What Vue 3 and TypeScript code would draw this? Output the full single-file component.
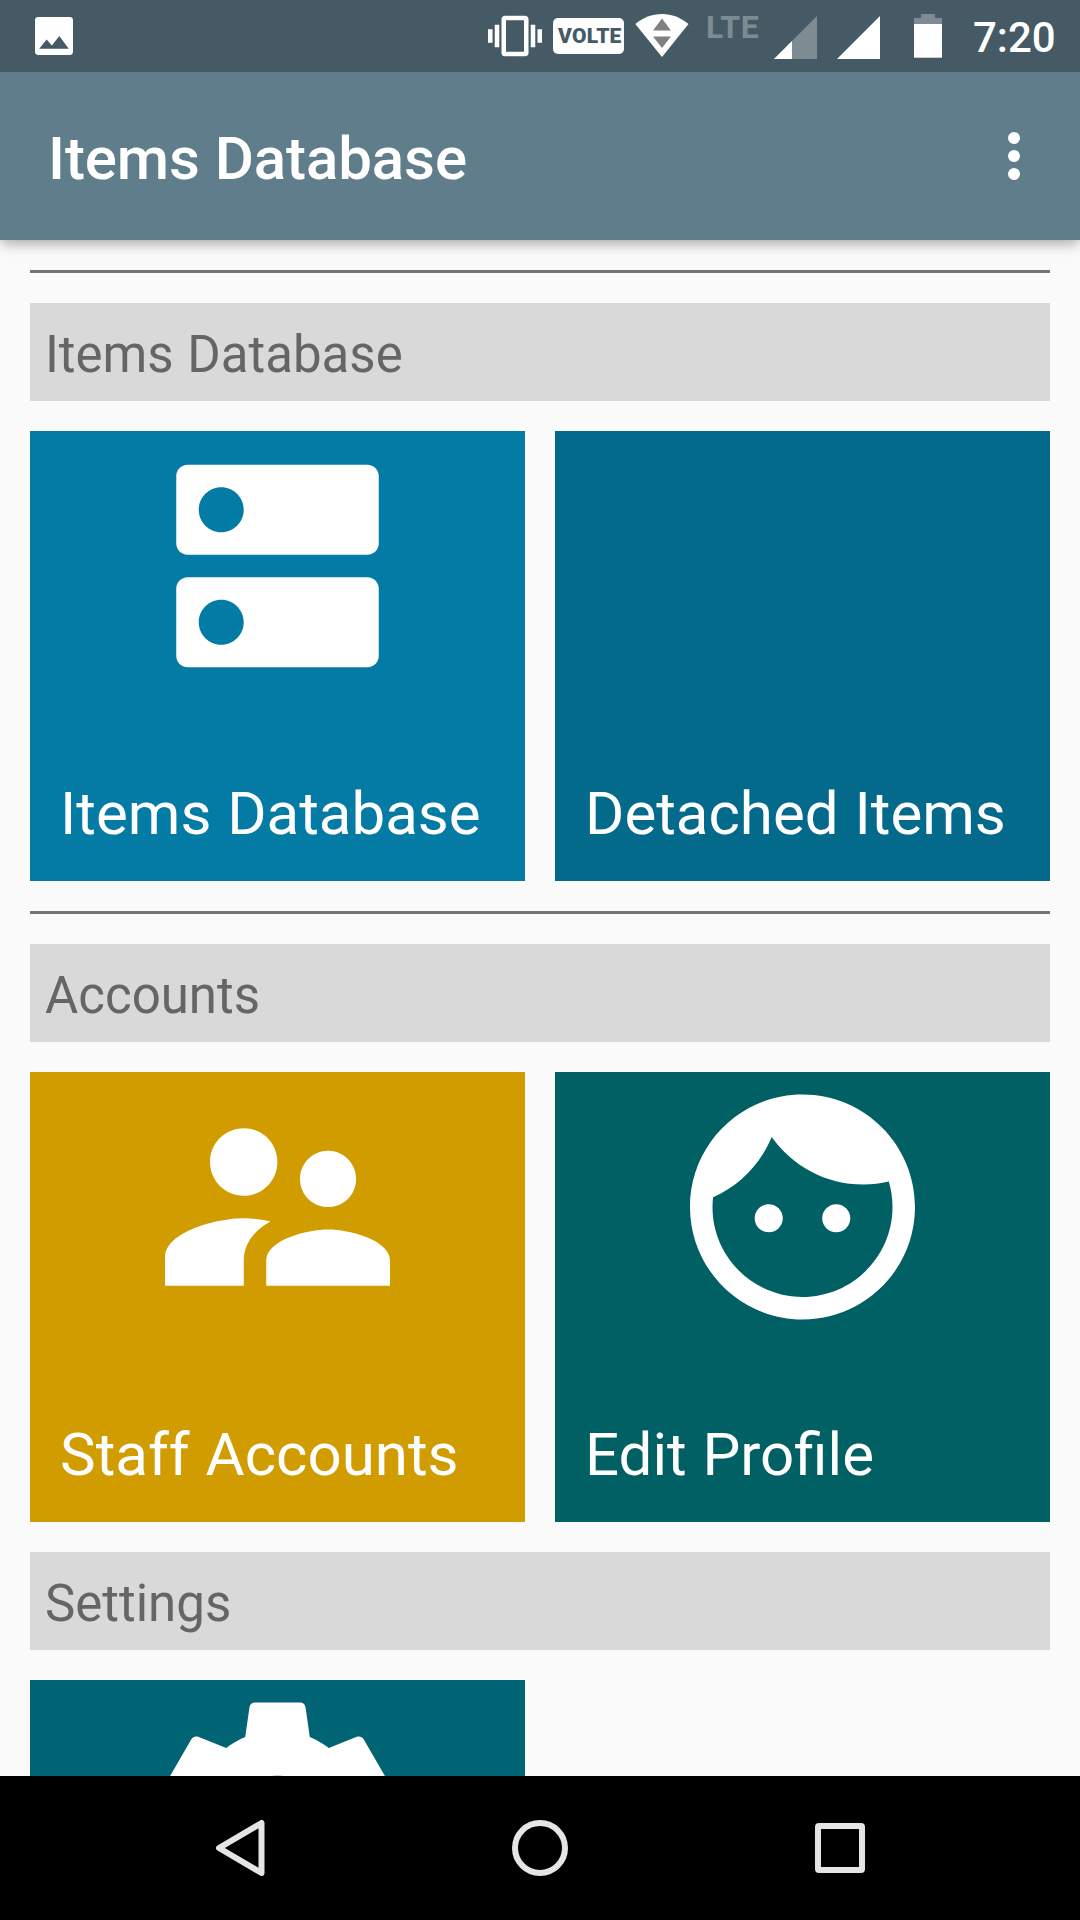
<script setup lang="ts">
interface Tile {
  label: string
  color: string
  icon?: string
}

interface Section {
  title: string
  divider: boolean
  tiles: Tile[]
}

const dns =
  'M20 13H4c-.55 0-1 .45-1 1v6c0 .55.45 1 1 1h16c.55 0 1-.45 1-1v-6c0-.55-.45-1-1-1zM7 19c-1.1 0-2-.9-2-2s.9-2 2-2 2 .9 2 2-.9 2-2 2zM20 3H4c-.55 0-1 .45-1 1v6c0 .55.45 1 1 1h16c.55 0 1-.45 1-1V4c0-.55-.45-1-1-1zM7 9c-1.1 0-2-.9-2-2s.9-2 2-2 2 .9 2 2-.9 2-2 2z'
const people =
  'M16.5 12c1.38 0 2.49-1.12 2.49-2.5S17.88 7 16.5 7C15.12 7 14 8.12 14 9.5s1.12 2.5 2.5 2.5zM9 11c1.66 0 2.99-1.34 2.99-3S10.66 5 9 5C7.34 5 6 6.34 6 8s1.34 3 3 3zm7.5 3c-1.83 0-5.5.92-5.5 2.75V19h11v-2.25c0-1.83-3.67-2.75-5.5-2.75zM9 13c-2.33 0-7 1.17-7 3.5V19h7v-2.25c0-.85.33-2.34 2.37-3.47C10.5 13.1 9.66 13 9 13z'
const face =
  'M9 11.75c-.69 0-1.25.56-1.25 1.25s.56 1.25 1.25 1.25 1.25-.56 1.25-1.25-.56-1.25-1.25-1.25zm6 0c-.69 0-1.25.56-1.25 1.25s.56 1.25 1.25 1.25 1.25-.56 1.25-1.25-.56-1.25-1.25-1.25zM12 2C6.48 2 2 6.48 2 12s4.48 10 10 10 10-4.48 10-10S17.52 2 12 2zm0 18c-4.41 0-8-3.59-8-8 0-.29.02-.58.05-.86 2.36-1.05 4.23-2.98 5.21-5.37C11.07 8.33 14.05 10 17.42 10c.78 0 1.53-.09 2.25-.26.21.71.33 1.47.33 2.26 0 4.41-3.59 8-8 8z'
const gear =
  'M19.43 12.98c.04-.32.07-.64.07-.98s-.03-.66-.07-.98l2.11-1.65c.19-.15.24-.42.12-.64l-2-3.46c-.12-.22-.39-.3-.61-.22l-2.49 1c-.52-.4-1.08-.73-1.69-.98l-.38-2.65C14.46 2.18 14.25 2 14 2h-4c-.25 0-.46.18-.49.42l-.38 2.65c-.61.25-1.17.59-1.69.98l-2.49-1c-.23-.09-.49 0-.61.22l-2 3.46c-.13.22-.07.49.12.64l2.11 1.65c-.04.32-.07.65-.07.98s.03.66.07.98l-2.11 1.65c-.19.15-.24.42-.12.64l2 3.46c.12.22.39.3.61.22l2.49-1c.52.4 1.08.73 1.69.98l.38 2.65c.03.24.24.42.49.42h4c.25 0 .46-.18.49-.42l.38-2.65c.61-.25 1.17-.59 1.69-.98l2.49 1c.23.09.49 0 .61-.22l2-3.46c.12-.22.07-.49-.12-.64l-2.11-1.65zM12 15.5c-1.93 0-3.5-1.57-3.5-3.5s1.57-3.5 3.5-3.5 3.5 1.57 3.5 3.5-1.57 3.5-3.5 3.5z'

const sections: Section[] = [
  {
    title: 'Items Database',
    divider: true,
    tiles: [
      { label: 'Items Database', color: '#047ba5', icon: dns },
      { label: 'Detached Items', color: '#036a8b' },
    ],
  },
  {
    title: 'Accounts',
    divider: true,
    tiles: [
      { label: 'Staff Accounts', color: '#d19c00', icon: people },
      { label: 'Edit Profile', color: '#006064', icon: face },
    ],
  },
  {
    title: 'Settings',
    divider: false,
    tiles: [{ label: '', color: '#006474', icon: gear }],
  },
]
</script>

<template>
  <div class="screen">
    <div class="status">
      <svg class="picture" width="38" height="38" viewBox="3 3 18 18">
        <path
          d="M21 19.500V4.500C21 3.600 20.400 3 19.500 3h-15C3.600 3 3 3.600 3 4.500v15c0 .9.600 1.500 1.500 1.500h15c.9 0 1.500-.6 1.500-1.500zM8.500 13.700l2.500 2.810L14.500 12l4.500 6H5l3.500-4.300z"
        />
      </svg>
      <svg class="vibrate" width="54" height="54" viewBox="0 0 24 24">
        <path
          d="M0 15h2V9H0v6zm3 2h2V7H3v10zm19-8v6h2V9h-2zm-3 8h2V7h-2v10zM16.5 3h-9C6.670 3 6 3.670 6 4.500v15c0 .83.67 1.500 1.500 1.500h9c.83 0 1.500-.67 1.500-1.500v-15c0-.83-.67-1.500-1.500-1.500zM16 19H8V5h8v14z"
        />
      </svg>
      <span class="volte">VOLTE</span>
      <svg class="wifi" width="54" height="72" viewBox="0 0 54 72">
        <path d="M0.300 24C8 17.500 17 14 27 14s18.500 3.500 26.500 10L27 57z" />
        <path class="arrows" d="M27 18.500l9 12H18zM18 36.500h18L27 48z" />
      </svg>
      <span class="lte">LTE</span>
      <svg class="signal-one" width="43" height="72" viewBox="0 0 43 72">
        <path class="faint" d="M43 16v43H0z" />
        <path d="M18 41v18H0z" />
      </svg>
      <svg class="signal-two" width="43" height="72" viewBox="0 0 43 72">
        <path d="M43 16v43H0z" />
      </svg>
      <svg class="battery" width="28" height="72" viewBox="0 0 28 72">
        <path class="faint" d="M7 14h14v4h7v6H0v-6h7z" />
        <path d="M0 24h28v33.700H0z" />
      </svg>
      <span class="clock">7:20</span>
    </div>

    <header class="toolbar">
      <h1>Items Database</h1>
      <svg width="72" height="72" viewBox="0 0 72 72">
        <circle cx="36" cy="18" r="6" />
        <circle cx="36" cy="36" r="6" />
        <circle cx="36" cy="54" r="6" />
      </svg>
    </header>

    <main class="content">
      <template v-for="section in sections" :key="section.title">
        <div v-if="section.divider" class="divider"></div>
        <h2>{{ section.title }}</h2>
        <div class="tiles">
          <div
            v-for="tile in section.tiles"
            :key="tile.label"
            class="tile"
            :style="{ backgroundColor: tile.color }"
          >
            <svg v-if="tile.icon" width="270" height="270" viewBox="0.044 0 24 24">
              <path :d="tile.icon" />
            </svg>
            <span v-if="tile.label" class="label">{{ tile.label }}</span>
          </div>
        </div>
      </template>
    </main>

    <nav class="navbar">
      <svg width="72" height="72" viewBox="0 0 72 72">
        <path d="M15 36L57.500 11v50z" />
      </svg>
      <svg width="72" height="72" viewBox="0 0 72 72">
        <circle cx="36" cy="36" r="25" />
      </svg>
      <svg width="72" height="72" viewBox="0 0 72 72">
        <rect x="14" y="14" width="44" height="44" rx="1" />
      </svg>
    </nav>
  </div>
</template>

<style>
body {
  margin: 0;
  background: #fafafa;
}
</style>

<style scoped>
.screen {
  width: 1080px;
  height: 1920px;
  display: flex;
  flex-direction: column;
  overflow: hidden;
  background: #fafafa;
  font-family: Roboto, 'Liberation Sans', sans-serif;
}

svg {
  display: block;
  flex: none;
  fill: #fff;
}

.status {
  position: relative;
  z-index: 2;
  flex: none;
  height: 72px;
  display: flex;
  align-items: center;
  background: #455a64;
  color: #fff;
}

.picture {
  margin-left: 35px;
}

.vibrate {
  margin-left: 415px;
}

.volte {
  box-sizing: border-box;
  width: 71px;
  height: 36px;
  margin-left: 11px;
  padding-left: 5px;
  border-radius: 5px;
  background: #fff;
  color: #455a64;
  font-size: 21px;
  font-weight: 900;
  line-height: 37px;
  letter-spacing: 0.2px;
  white-space: nowrap;
}

.wifi {
  margin-left: 11px;
}

.arrows {
  fill: #808080;
}

.lte {
  width: 55px;
  margin-left: 17px;
  padding-bottom: 18px;
  color: #7d8c93;
  font-size: 32px;
  font-weight: 700;
  line-height: 32px;
  letter-spacing: 0.6px;
}

.faint {
  fill: #7d8c93;
}

.signal-one {
  margin-left: 13px;
}

.signal-two {
  margin-left: 20px;
}

.battery {
  margin-left: 34px;
}

.clock {
  margin-left: 31px;
  padding-top: 3px;
  font-size: 42px;
  font-weight: 500;
  line-height: 48px;
}

.toolbar {
  position: relative;
  z-index: 1;
  flex: none;
  box-sizing: border-box;
  height: 168px;
  padding: 0 30px 0 48px;
  display: flex;
  align-items: center;
  justify-content: space-between;
  background: #607d8b;
  box-shadow: 0 5px 12px -1px rgba(0, 0, 0, 0.32);
}

h1 {
  margin: 0;
  padding-top: 5px;
  color: #fff;
  font-size: 60px;
  font-weight: 500;
  line-height: 70px;
  letter-spacing: -0.08px;
}

.content {
  flex: 1;
  min-height: 0;
  display: flex;
  flex-direction: column;
  gap: 30px;
  padding: 30px 30px 0;
  overflow: hidden;
}

.divider {
  flex: none;
  height: 3px;
  background: #757575;
}

h2 {
  flex: none;
  box-sizing: border-box;
  height: 98px;
  margin: 0;
  padding: 5px 15px 0;
  background: #d9d9d9;
  color: #656565;
  font-size: 51px;
  font-weight: 400;
  line-height: 93px;
  word-spacing: 1px;
}

.tiles {
  flex: none;
  display: grid;
  grid-template-columns: 1fr 1fr;
  gap: 30px;
}

.tile {
  box-sizing: border-box;
  height: 450px;
  padding-bottom: 32px;
  display: flex;
  flex-direction: column;
  align-items: center;
}

.label {
  align-self: flex-start;
  margin-top: auto;
  padding-left: 30px;
  color: #fff;
  font-size: 60px;
  line-height: 70px;
  word-spacing: 1px;
}

.navbar {
  flex: none;
  height: 144px;
  padding: 0 90px;
  display: grid;
  grid-template-columns: repeat(3, 1fr);
  align-items: center;
  justify-items: center;
  background: #000;
}

.navbar svg {
  fill: none;
  stroke: #e5e5e5;
  stroke-width: 6;
  stroke-linejoin: round;
}
</style>
